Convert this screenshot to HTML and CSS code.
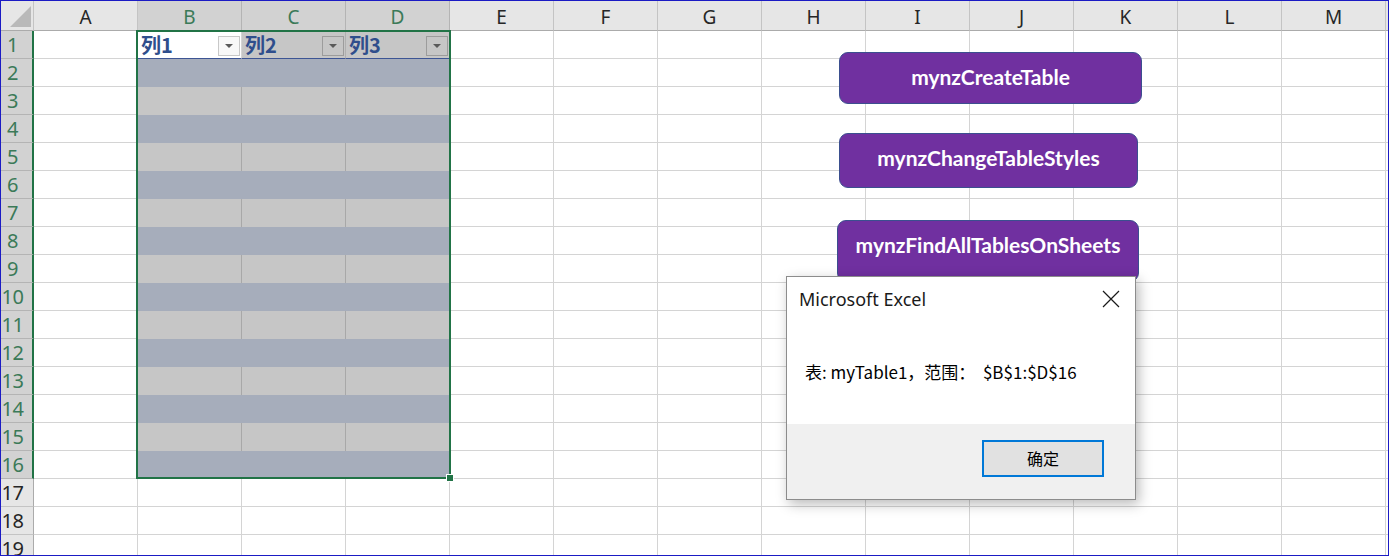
FILE: index.html
```html
<!DOCTYPE html>
<html>
<head>
<meta charset="utf-8">
<link rel="stylesheet" href="styles.css">
</head>
<body>
<div class="frame">
  <div class="colhead">
    <div class="corner"><span class="tri"></span></div>
    <div class="ch">A</div>
    <div class="ch sel">B</div>
    <div class="ch sel">C</div>
    <div class="ch sel">D</div>
    <div class="ch">E</div>
    <div class="ch">F</div>
    <div class="ch">G</div>
    <div class="ch">H</div>
    <div class="ch">I</div>
    <div class="ch">J</div>
    <div class="ch">K</div>
    <div class="ch">L</div>
    <div class="ch">M</div>
    <div class="ch"></div>
  </div>
  <div class="body">
    <div class="rowhead">
      <div class="rh sel">1</div>
      <div class="rh sel">2</div>
      <div class="rh sel">3</div>
      <div class="rh sel">4</div>
      <div class="rh sel">5</div>
      <div class="rh sel">6</div>
      <div class="rh sel">7</div>
      <div class="rh sel">8</div>
      <div class="rh sel">9</div>
      <div class="rh sel">10</div>
      <div class="rh sel">11</div>
      <div class="rh sel">12</div>
      <div class="rh sel">13</div>
      <div class="rh sel">14</div>
      <div class="rh sel">15</div>
      <div class="rh sel">16</div>
      <div class="rh">17</div>
      <div class="rh">18</div>
      <div class="rh">19</div>
    </div>
    <div class="cells">
      <div class="table">
        <div class="thead">
          <div class="th active"><span class="tt">列1</span><span class="filter"><i class="arrow"></i></span></div>
          <div class="th"><span class="tt">列2</span><span class="filter"><i class="arrow"></i></span></div>
          <div class="th"><span class="tt">列3</span><span class="filter"><i class="arrow"></i></span></div>
        </div>
        <div class="band"></div>
        <div class="plain"><div></div><div></div><div></div></div>
        <div class="band"></div>
        <div class="plain"><div></div><div></div><div></div></div>
        <div class="band"></div>
        <div class="plain"><div></div><div></div><div></div></div>
        <div class="band"></div>
        <div class="plain"><div></div><div></div><div></div></div>
        <div class="band"></div>
        <div class="plain"><div></div><div></div><div></div></div>
        <div class="band"></div>
        <div class="plain"><div></div><div></div><div></div></div>
        <div class="band"></div>
        <div class="plain"><div></div><div></div><div></div></div>
        <div class="band"></div>
      </div>
      <div class="selection"><span class="handle"></span></div>
    </div>
  </div>

  <div class="macro m1">mynzCreateTable</div>
  <div class="macro m2">mynzChangeTableStyles</div>
  <div class="macro m3">mynzFindAllTablesOnSheets</div>

  <div class="dialog">
    <div class="dlg-head">
      <span class="dlg-title">Microsoft Excel</span>
      <svg class="dlg-close" width="18" height="18" viewBox="0 0 18 18"><path d="M1 1 L17 17 M17 1 L1 17" stroke="#1a1a1a" stroke-width="1.2" fill="none"/></svg>
    </div>
    <div class="dlg-body">表: myTable1，范围：  $B$1:$D$16</div>
    <div class="dlg-foot">
      <div class="dlg-btn">确定</div>
    </div>
  </div>
</div>
</body>
</html>
```
FILE: styles.css
```css
html, body {
  margin: 0;
  padding: 0;
  background: #ffffff;
}

.frame {
  position: relative;
  width: 1389px;
  height: 556px;
  box-sizing: border-box;
  border: 1px solid #1b1bc4;
  overflow: hidden;
  display: flex;
  flex-direction: column;
  font-family: "Noto Sans", "Liberation Sans", sans-serif;
  background: #ffffff;
}

/* column headers */
.colhead {
  display: flex;
  height: 30px;
  flex: none;
}

.corner {
  width: 33px;
  height: 30px;
  box-sizing: border-box;
  background: #e6e6e6;
  border-right: 1px solid #c4c4c4;
  border-bottom: 1px solid #ababab;
  display: flex;
  align-items: flex-end;
  justify-content: flex-end;
  padding: 0 2px 3px 0;
  flex: none;
}

.tri {
  width: 21px;
  height: 21px;
  background: #b9b9b9;
  clip-path: polygon(100% 0, 100% 100%, 0 100%);
}

.ch {
  width: 104px;
  height: 30px;
  flex: none;
  box-sizing: border-box;
  background: #e6e6e6;
  border-right: 1px solid #c4c4c4;
  border-bottom: 1px solid #ababab;
  display: flex;
  align-items: center;
  justify-content: center;
  font-size: 19px;
  color: #262626;
  padding-top: 2px;
}

.ch.sel {
  background: #d2d2d2;
  color: #3b7a58;
  border-right-color: #b4b4b4;
  border-bottom-color: #217346;
}

/* body */
.body {
  display: flex;
  flex: 1;
}

.rowhead {
  display: flex;
  flex-direction: column;
  width: 33px;
  flex: none;
}

.rh {
  height: 28px;
  flex: none;
  box-sizing: border-box;
  background: #e6e6e6;
  border-right: 1px solid #ababab;
  border-bottom: 1px solid #c4c4c4;
  display: flex;
  align-items: center;
  justify-content: center;
  padding-right: 9px;
  font-size: 20px;
  color: #262626;
  letter-spacing: -0.5px;
}

.rh.sel {
  background: #d2d2d2;
  color: #3b7a58;
  border-right: 2px solid #217346;
  padding-right: 8px;
  border-bottom-color: #b4b4b4;
}

.cells {
  position: relative;
  flex: 1;
  background-image:
    repeating-linear-gradient(to right, transparent 0 103px, #d4d4d4 103px 104px),
    repeating-linear-gradient(to bottom, transparent 0 27px, #d4d4d4 27px 28px);
}

/* table */
.table {
  margin-left: 104px;
  width: 312px;
  display: flex;
  flex-direction: column;
}

.thead {
  display: flex;
  height: 28px;
}

.th {
  width: 104px;
  height: 28px;
  box-sizing: border-box;
  background: #c6c6c6;
  border-right: 1px solid #b0b0b0;
  border-bottom: 1px solid #3d5594;
  display: flex;
  align-items: flex-end;
  justify-content: space-between;
  padding: 0 1px 1px 3px;
}

.th.active {
  background: #ffffff;
  border-right-color: #d4d4d4;
}

.tt {
  font-family: "Noto Sans CJK SC", "Noto Sans", sans-serif;
  font-weight: 700;
  font-size: 20px;
  line-height: 24px;
  color: #2f4e8c;
}

.filter {
  width: 22px;
  height: 20px;
  box-sizing: border-box;
  border: 1px solid #9c9c9c;
  display: flex;
  align-items: center;
  justify-content: center;
  margin-bottom: 1px;
}

.th.active .filter {
  border-color: #c8c8c8;
  background: #f8f8f8;
}

.arrow {
  width: 0;
  height: 0;
  border-left: 4px solid transparent;
  border-right: 4px solid transparent;
  border-top: 4px solid #5a5a5a;
}

.band {
  height: 28px;
  background: #a6adbb;
}

.plain {
  display: flex;
  height: 28px;
}

.plain div {
  width: 104px;
  box-sizing: border-box;
  background: #c6c6c6;
  border-right: 1px solid #a8a8a8;
}

.selection {
  position: absolute;
  left: 102px;
  top: -1px;
  width: 315px;
  height: 449px;
  box-sizing: border-box;
  border: 2px solid #217346;
}

.handle {
  position: absolute;
  right: -5px;
  bottom: -5px;
  width: 8px;
  height: 8px;
  box-sizing: border-box;
  background: #217346;
  border: 1px solid #ffffff;
}

/* macro buttons */
.macro {
  position: absolute;
  box-sizing: border-box;
  background: #7030a0;
  border: 1.5px solid #3b4f8f;
  border-radius: 9px;
  color: #ffffff;
  font-family: "Lato", "Liberation Sans", sans-serif;
  font-weight: 700;
  font-size: 21px;
  display: flex;
  align-items: center;
  justify-content: center;
}

.m1 { left: 838px; top: 51px; width: 303px; height: 52px; padding-bottom: 3px; }
.m2 { left: 838px; top: 132px; width: 299px; height: 55px; padding-bottom: 6px; }
.m3 { left: 836px; top: 219px; width: 302px; height: 62px; align-items: flex-start; padding-top: 11px; }

/* dialog */
.dialog {
  position: absolute;
  left: 785px;
  top: 275px;
  width: 350px;
  height: 224px;
  box-sizing: border-box;
  border: 1px solid #8c8c8c;
  background: #ffffff;
  box-shadow: 3px 4px 12px rgba(0, 0, 0, 0.28);
  display: flex;
  flex-direction: column;
}

.dlg-head {
  height: 43px;
  flex: none;
  display: flex;
  align-items: center;
  justify-content: space-between;
  padding: 0 15px 0 12px;
}

.dlg-title {
  font-family: "Noto Sans", "Open Sans", sans-serif;
  font-size: 18px;
  color: #1a1a1a;
}

.dlg-close {
  display: block;
}

.dlg-body {
  height: 104px;
  flex: none;
  display: flex;
  align-items: center;
  padding-left: 18px;
  padding-bottom: 2px;
  box-sizing: border-box;
  font-family: "Noto Sans CJK SC", "Noto Sans", sans-serif;
  font-size: 17px;
  color: #000000;
  white-space: pre;
}

.dlg-foot {
  flex: 1;
  background: #f0f0f0;
  display: flex;
  justify-content: flex-end;
  align-items: flex-start;
  padding: 16px 31px 0 0;
}

.dlg-btn {
  width: 122px;
  height: 37px;
  box-sizing: border-box;
  border: 2px solid #0078d7;
  background: #e1e1e1;
  display: flex;
  align-items: center;
  justify-content: center;
  padding-bottom: 1px;
  font-family: "Noto Sans CJK SC", sans-serif;
  font-size: 16px;
  color: #000000;
}
```
